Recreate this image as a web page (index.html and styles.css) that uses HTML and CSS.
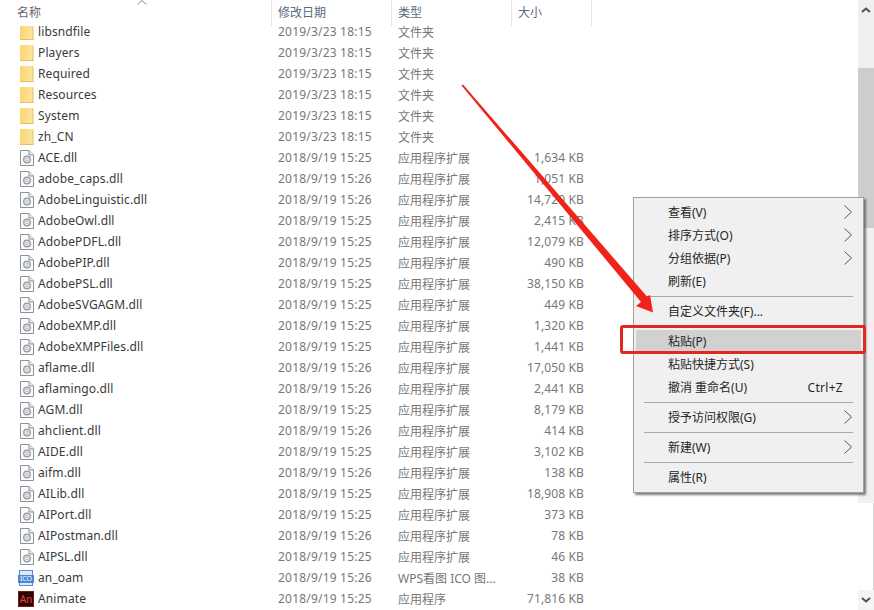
FILE: index.html
```html
<!DOCTYPE html>
<html lang="zh-CN">
<head>
<meta charset="utf-8">
<title>文件列表</title>
<link rel="stylesheet" href="styles.css">
</head>
<body>
<svg class="defs" width="0" height="0" aria-hidden="true">
  <defs>
    <linearGradient id="fold" x1="0" y1="0" x2="1" y2="0">
      <stop offset="0" stop-color="#fbd672"/>
      <stop offset="0.85" stop-color="#fde39b"/>
      <stop offset="1" stop-color="#e9c262"/>
    </linearGradient>
    <symbol id="folder" viewBox="0 0 14 16">
      <path d="M0 0h12.500l1 1V16H0z" fill="url(#fold)"/>
      <path d="M0 15.500h13.500" stroke="#e5c06a" fill="none"/>
    </symbol>
    <symbol id="dll" viewBox="0 0 14 16">
      <path d="M.5.5h8.500l4.500 4.500v10.500H.5z" fill="#fbfbfb" stroke="#8b929a"/>
      <path d="M9 .5V5h4.500" fill="#e8e8e8" stroke="#8b929a"/>
      <circle cx="7" cy="9.500" r="3.300" fill="#e4e6e8" stroke="#8f979d" stroke-width="1.200"/>
      <circle cx="7" cy="9.500" r="1.200" fill="#fff" stroke="#a2a8ad" stroke-width=".7"/>
    </symbol>
  </defs>
</svg>
<div class="window">
  <main class="pane">
    <header class="head">
      <div class="hcell hname">名称<svg class="sort" width="10" height="5" viewBox="0 0 10 5"><path d="M.5 4.500 5 .5l4.500 4" fill="none" stroke="#8a8a8a"/></svg></div>
      <div class="hcell">修改日期</div>
      <div class="hcell">类型</div>
      <div class="hcell hsize">大小</div>
    </header>
    <div class="list">
      <div class="row"><svg class="ic"><use href="#folder"/></svg><span class="name">libsndfile</span><span class="date">2019/3/23 18:15</span><span>文件夹</span><span class="size"></span></div>
      <div class="row"><svg class="ic"><use href="#folder"/></svg><span class="name">Players</span><span class="date">2019/3/23 18:15</span><span>文件夹</span><span class="size"></span></div>
      <div class="row"><svg class="ic"><use href="#folder"/></svg><span class="name">Required</span><span class="date">2019/3/23 18:15</span><span>文件夹</span><span class="size"></span></div>
      <div class="row"><svg class="ic"><use href="#folder"/></svg><span class="name">Resources</span><span class="date">2019/3/23 18:15</span><span>文件夹</span><span class="size"></span></div>
      <div class="row"><svg class="ic"><use href="#folder"/></svg><span class="name">System</span><span class="date">2019/3/23 18:15</span><span>文件夹</span><span class="size"></span></div>
      <div class="row"><svg class="ic"><use href="#folder"/></svg><span class="name">zh_CN</span><span class="date">2019/3/23 18:15</span><span>文件夹</span><span class="size"></span></div>
      <div class="row"><svg class="ic"><use href="#dll"/></svg><span class="name">ACE.dll</span><span class="date">2018/9/19 15:25</span><span>应用程序扩展</span><span class="size">1,634 KB</span></div>
      <div class="row"><svg class="ic"><use href="#dll"/></svg><span class="name">adobe_caps.dll</span><span class="date">2018/9/19 15:26</span><span>应用程序扩展</span><span class="size">1,051 KB</span></div>
      <div class="row"><svg class="ic"><use href="#dll"/></svg><span class="name">AdobeLinguistic.dll</span><span class="date">2018/9/19 15:26</span><span>应用程序扩展</span><span class="size">14,720 KB</span></div>
      <div class="row"><svg class="ic"><use href="#dll"/></svg><span class="name">AdobeOwl.dll</span><span class="date">2018/9/19 15:25</span><span>应用程序扩展</span><span class="size">2,415 KB</span></div>
      <div class="row"><svg class="ic"><use href="#dll"/></svg><span class="name">AdobePDFL.dll</span><span class="date">2018/9/19 15:25</span><span>应用程序扩展</span><span class="size">12,079 KB</span></div>
      <div class="row"><svg class="ic"><use href="#dll"/></svg><span class="name">AdobePIP.dll</span><span class="date">2018/9/19 15:25</span><span>应用程序扩展</span><span class="size">490 KB</span></div>
      <div class="row"><svg class="ic"><use href="#dll"/></svg><span class="name">AdobePSL.dll</span><span class="date">2018/9/19 15:25</span><span>应用程序扩展</span><span class="size">38,150 KB</span></div>
      <div class="row"><svg class="ic"><use href="#dll"/></svg><span class="name">AdobeSVGAGM.dll</span><span class="date">2018/9/19 15:25</span><span>应用程序扩展</span><span class="size">449 KB</span></div>
      <div class="row"><svg class="ic"><use href="#dll"/></svg><span class="name">AdobeXMP.dll</span><span class="date">2018/9/19 15:25</span><span>应用程序扩展</span><span class="size">1,320 KB</span></div>
      <div class="row"><svg class="ic"><use href="#dll"/></svg><span class="name">AdobeXMPFiles.dll</span><span class="date">2018/9/19 15:25</span><span>应用程序扩展</span><span class="size">1,441 KB</span></div>
      <div class="row"><svg class="ic"><use href="#dll"/></svg><span class="name">aflame.dll</span><span class="date">2018/9/19 15:26</span><span>应用程序扩展</span><span class="size">17,050 KB</span></div>
      <div class="row"><svg class="ic"><use href="#dll"/></svg><span class="name">aflamingo.dll</span><span class="date">2018/9/19 15:26</span><span>应用程序扩展</span><span class="size">2,441 KB</span></div>
      <div class="row"><svg class="ic"><use href="#dll"/></svg><span class="name">AGM.dll</span><span class="date">2018/9/19 15:25</span><span>应用程序扩展</span><span class="size">8,179 KB</span></div>
      <div class="row"><svg class="ic"><use href="#dll"/></svg><span class="name">ahclient.dll</span><span class="date">2018/9/19 15:26</span><span>应用程序扩展</span><span class="size">414 KB</span></div>
      <div class="row"><svg class="ic"><use href="#dll"/></svg><span class="name">AIDE.dll</span><span class="date">2018/9/19 15:25</span><span>应用程序扩展</span><span class="size">3,102 KB</span></div>
      <div class="row"><svg class="ic"><use href="#dll"/></svg><span class="name">aifm.dll</span><span class="date">2018/9/19 15:26</span><span>应用程序扩展</span><span class="size">138 KB</span></div>
      <div class="row"><svg class="ic"><use href="#dll"/></svg><span class="name">AILib.dll</span><span class="date">2018/9/19 15:25</span><span>应用程序扩展</span><span class="size">18,908 KB</span></div>
      <div class="row"><svg class="ic"><use href="#dll"/></svg><span class="name">AIPort.dll</span><span class="date">2018/9/19 15:25</span><span>应用程序扩展</span><span class="size">373 KB</span></div>
      <div class="row"><svg class="ic"><use href="#dll"/></svg><span class="name">AIPostman.dll</span><span class="date">2018/9/19 15:26</span><span>应用程序扩展</span><span class="size">78 KB</span></div>
      <div class="row"><svg class="ic"><use href="#dll"/></svg><span class="name">AIPSL.dll</span><span class="date">2018/9/19 15:25</span><span>应用程序扩展</span><span class="size">46 KB</span></div>
      <div class="row"><span class="ico-file"><span class="ico-tag">ICO</span></span><span class="name">an_oam</span><span class="date">2018/9/19 15:26</span><span>WPS看图 ICO 图...</span><span class="size">38 KB</span></div>
      <div class="row"><span class="an-icon">An</span><span class="name">Animate</span><span class="date">2018/9/19 15:25</span><span>应用程序</span><span class="size">71,816 KB</span></div>
    </div>
  </main>
  <aside class="scrollbar">
    <div class="sb-btn"><svg width="10" height="6" viewBox="0 0 10 6"><path d="M1 5l4-3.500L9 5" fill="none" stroke="#505050" stroke-width="2"/></svg></div>
    <div class="sb-track-top"></div>
    <div class="sb-thumb"></div>
    <div class="sb-track-mid"></div>
    <div class="sb-blank"></div>
    <div class="sb-btn sb-down"><svg width="10" height="6" viewBox="0 0 10 6"><path d="M1 1l4 3.500L9 1" fill="none" stroke="#505050" stroke-width="2"/></svg></div>
  </aside>
</div>

<nav class="menu">
  <div class="item">查看(V)<svg class="chev" width="8" height="14" viewBox="0 0 8 14"><path d="M.5.5l7 6.500-7 6.500" fill="none" stroke="#555"/></svg></div>
  <div class="item">排序方式(O)<svg class="chev" width="8" height="14" viewBox="0 0 8 14"><path d="M.5.5l7 6.500-7 6.500" fill="none" stroke="#555"/></svg></div>
  <div class="item">分组依据(P)<svg class="chev" width="8" height="14" viewBox="0 0 8 14"><path d="M.5.5l7 6.500-7 6.500" fill="none" stroke="#555"/></svg></div>
  <div class="item">刷新(E)</div>
  <div class="sep"></div>
  <div class="item">自定义文件夹(F)...</div>
  <div class="sep"></div>
  <div class="item hot">粘贴(P)</div>
  <div class="item">粘贴快捷方式(S)</div>
  <div class="item">撤消 重命名(U)<span class="key">Ctrl+Z</span></div>
  <div class="sep"></div>
  <div class="item">授予访问权限(G)<svg class="chev" width="8" height="14" viewBox="0 0 8 14"><path d="M.5.5l7 6.500-7 6.500" fill="none" stroke="#555"/></svg></div>
  <div class="sep"></div>
  <div class="item">新建(W)<svg class="chev" width="8" height="14" viewBox="0 0 8 14"><path d="M.5.5l7 6.500-7 6.500" fill="none" stroke="#555"/></svg></div>
  <div class="sep"></div>
  <div class="item">属性(R)</div>
</nav>

<div class="redbox"></div>
<svg class="arrow" width="874" height="610" viewBox="0 0 874 610" aria-hidden="true">
  <path d="M461.500 85.500 463 84.500 647 296.500 650 295 653 312.500 636 306 641 302Z" fill="#f0231a"/>
</svg>
</body>
</html>
```

FILE: styles.css
```css
* { box-sizing: border-box; }
html, body { margin: 0; height: 610px; overflow: hidden; background: #fff; }
body {
  position: relative;
  font-family: "Noto Sans", "Noto Sans CJK SC", sans-serif;
  font-size: 12px;
}
.defs { position: absolute; }

.window { display: flex; height: 610px; }
.pane { flex: 1; min-width: 0; height: 610px; overflow: hidden; }

.head {
  position: relative;
  z-index: 1;
  display: grid;
  grid-template-columns: 272px 120px 120px 80px;
  height: 26px;
  background: #fff;
  color: #5a6a80;
  line-height: 26px;
}
.hcell { padding-left: 6px; border-right: 1px solid #e5e5e5; white-space: nowrap; }
.hname { position: relative; padding-left: 17px; color: #666; }
.sort { position: absolute; left: 137px; top: 0; }

.list { margin-top: -5px; }
.row {
  display: grid;
  grid-template-columns: 18px 240px 120px 120px 66px;
  align-items: center;
  height: 21px;
  padding-left: 20px;
  color: #777;
  white-space: nowrap;
}
.ic { width: 14px; height: 16px; }
.name { color: #3a3a3a; letter-spacing: .12px; }
.date { letter-spacing: .2px; }
.size { text-align: right; letter-spacing: .12px; }

.ico-file {
  position: relative;
  display: block;
  width: 14px;
  height: 16px;
  margin-left: -1px;
  background: #dfe9f7;
  border: 1px solid #5b8bd0;
}
.ico-tag {
  position: absolute;
  left: -2px;
  top: 4px;
  width: 16px;
  height: 8px;
  background: #4d86d6;
  color: #fff;
  font-size: 7px;
  line-height: 8px;
  text-align: center;
}
.an-icon {
  display: block;
  width: 16px;
  height: 16px;
  margin-left: -2px;
  background: #2c0404;
  border: 1px solid #7a1a14;
  color: #e8403a;
  font-size: 10px;
  line-height: 14px;
  text-align: center;
}

.scrollbar { display: flex; flex-direction: column; width: 16px; height: 610px; }
.sb-btn { display: flex; align-items: center; justify-content: center; height: 20px; background: #f0f0f0; }
.sb-track-top { height: 48px; background: #f0f0f0; }
.sb-thumb { height: 160px; background: #cdcdcd; }
.sb-track-mid { height: 275px; background: #f0f0f0; }
.sb-blank { flex: 1; background: #fff; border-right: 1px solid #d4d4d4; }
.sb-down { background: #f4f4f4; }

.menu {
  position: absolute;
  left: 633px;
  top: 197px;
  width: 231px;
  padding: 3px 0;
  background: #f0f0f0;
  border: 1px solid #a0a0a0;
  box-shadow: 2px 2px 2px rgba(80, 80, 80, .75);
  color: #262626;
}
.item {
  position: relative;
  height: 23px;
  margin: 0 2px;
  padding-left: 32px;
  line-height: 23px;
  white-space: nowrap;
}
.hot { background: #d1d1d1; }
.chev { position: absolute; left: 208px; top: 4px; }
.key { position: absolute; right: 18px; top: 0; letter-spacing: .3px; }
.sep { height: 1px; margin: 3px 10px 3px 10px; background: #a8a8a8; }

.redbox {
  position: absolute;
  left: 620px;
  top: 325px;
  width: 246px;
  height: 29px;
  border: 3px solid #e2271d;
  border-radius: 3px;
}
.arrow { position: absolute; left: 0; top: 0; pointer-events: none; }
```
